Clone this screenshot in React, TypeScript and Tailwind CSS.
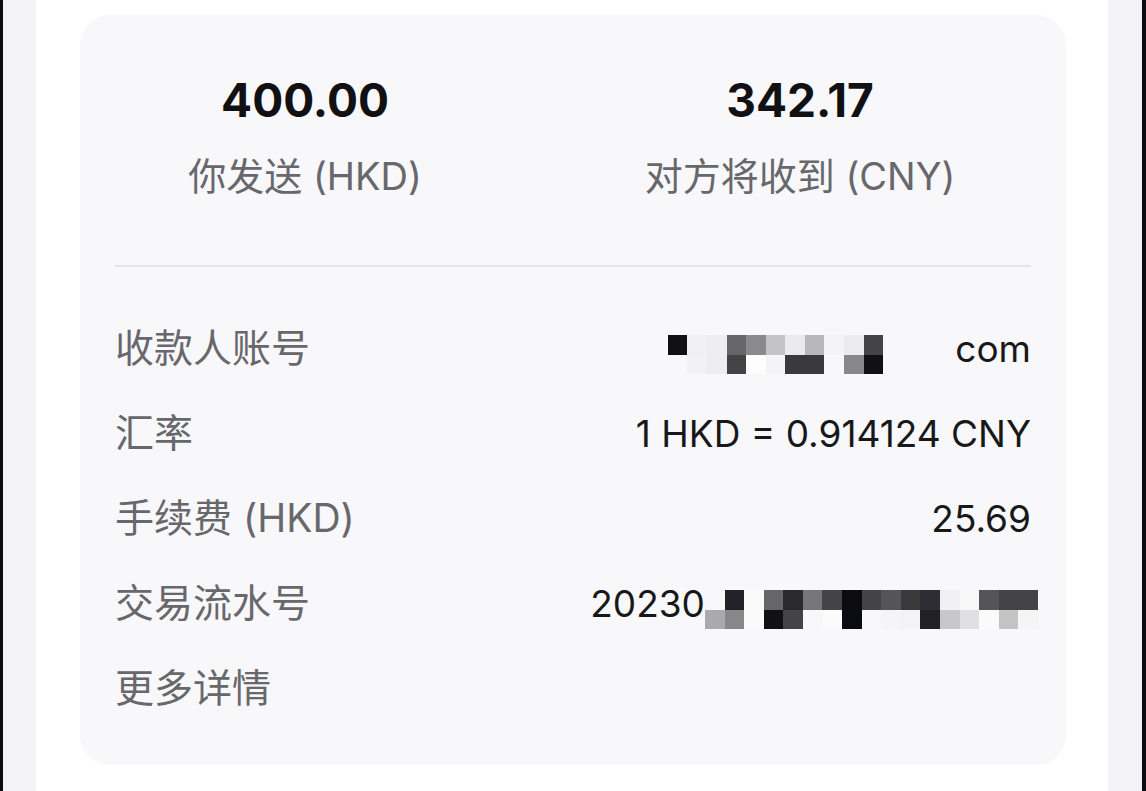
import React from 'react';

const font = { fontFamily: '"Inter", "Noto Sans CJK SC", sans-serif' };

// pixelated (mosaic) cells, two rows each, colour or '' for blank
const accountTop = ['#111114', '#f0f0f3', '#eeeef0', '#666669', '#8a8a8d', '#c4c4c6', '#eaeaec', '#b8b8ba', '#f4f4f6', '#ececef', '#444447'];
const accountBottom = ['', '#f2f2f4', '#ededf0', '#444447', '#fdfdfd', '#f4f4f6', '#3a3a3d', '#3a3a3d', '#f8f8fa', '#88888b', '#111114'];

const serialTop = ['', '#222228', '#fafafa', '#666669', '#2a2a2d', '#77777a', '#444447', '#0c0c10', '#444447', '#555558', '#3a3a3d', '#2d2d33', '#f0f0f2', '#f8f8f8', '#555558', '#444447', '#444447'];
const serialBottom = ['#aaaaad', '#88888b', '#fafafa', '#111114', '#444447', '#f8f8fa', '#fbfbfb', '#0b0b12', '#f8f8fa', '#f5f5f7', '#f3f3f5', '#222225', '#c8c8ca', '#e0e0e2', '#fafafa', '#c4c4c6', '#f5f5f5'];

const Mosaic = ({ top, bottom }: { top: string[]; bottom: string[] }) => (
  <div className="flex flex-col mt-[12px]">
    {[top, bottom].map((row, i) => (
      <div key={i} className="flex">
        {row.map((c, j) => (
          <div key={j} className="w-[19.6px] h-[19.5px]" style={{ backgroundColor: c || 'transparent' }} />
        ))}
      </div>
    ))}
  </div>
);

const Row = ({ label, children }: { label: string; children?: React.ReactNode }) => (
  <div className="h-[85px] flex items-center justify-between">
    <span className="text-[39px] leading-[46px] text-[#67676c] -mt-[3px]">{label}</span>
    <div className="flex items-center text-[37px] leading-[44px] text-[#18181b] -mt-[2px]">{children}</div>
  </div>
);

export default function App() {
  return (
    <div className="w-[1146px] h-[791px] flex overflow-hidden bg-white" style={font}>
      <div className="w-[3px] bg-[#0c0c12]" />
      <div className="w-[33px] bg-[#f3f3f7]" />
      <div className="flex-1 pl-[44px] pr-[42px] pt-[15px]">
        <div className="h-[750px] rounded-[30px] bg-[#f8f8fa] pt-[56px] px-[35px]">
          <div className="flex -ml-[10px] gap-[95px]">
            <div className="w-[400px] flex flex-col items-center">
              <span className="text-[46px] leading-[58px] font-bold text-[#111114]">400.00</span>
              <span className="mt-[24px] text-[38px] leading-[46px] text-[#67676c]">你发送 (HKD)</span>
            </div>
            <div className="w-[400px] flex flex-col items-center">
              <span className="text-[46px] leading-[58px] font-bold text-[#111114]">342.17</span>
              <span className="mt-[24px] text-[38px] leading-[46px] text-[#67676c]">对方将收到 (CNY)</span>
            </div>
          </div>
          <div className="mt-[66px] h-[2px] bg-[#e6e6ea]" />
          <div className="mt-[40px] flex flex-col">
            <Row label="收款人账号">
              <Mosaic top={accountTop} bottom={accountBottom} />
              <span className="ml-[72px]">com</span>
            </Row>
            <Row label="汇率">1 HKD = 0.914124 CNY</Row>
            <Row label="手续费 (HKD)">25.69</Row>
            <Row label="交易流水号">
              <span>20230</span>
              <div className="-mr-[7px]">
                <Mosaic top={serialTop} bottom={serialBottom} />
              </div>
            </Row>
            <Row label="更多详情" />
          </div>
        </div>
      </div>
      <div className="w-[34px] bg-[#f3f3f7]" />
      <div className="w-[4px] bg-[#0c0c12]" />
    </div>
  );
}
